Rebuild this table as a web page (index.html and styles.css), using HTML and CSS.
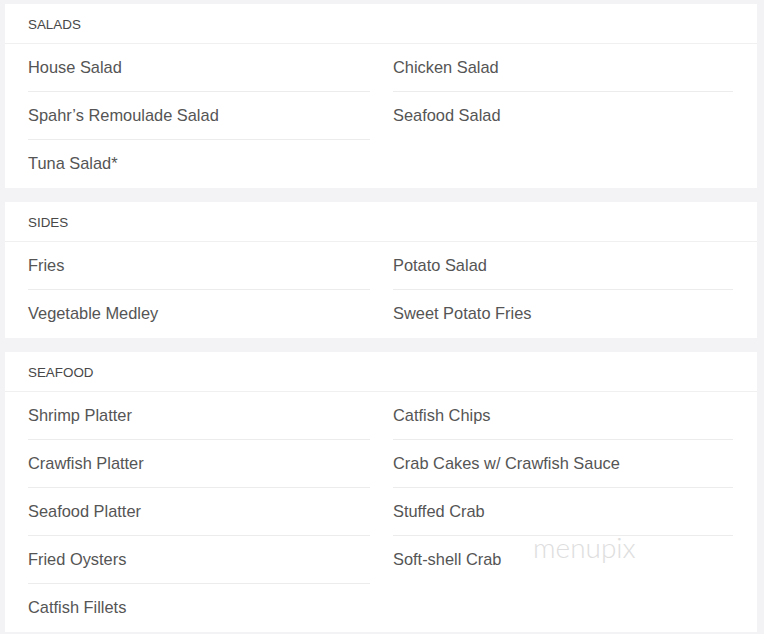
FILE: index.html
```html
<!DOCTYPE html>
<html>
<head>
<meta charset="utf-8">
<link rel="stylesheet" href="styles.css">
</head>
<body>
<div class="page">
  <section class="card">
    <h2 class="card-title">SALADS</h2>
    <div class="cols">
      <ul class="col">
        <li>House Salad</li>
        <li>Spahr’s Remoulade Salad</li>
        <li>Tuna Salad*</li>
      </ul>
      <ul class="col">
        <li>Chicken Salad</li>
        <li>Seafood Salad</li>
      </ul>
    </div>
  </section>
  <section class="card">
    <h2 class="card-title">SIDES</h2>
    <div class="cols">
      <ul class="col">
        <li>Fries</li>
        <li>Vegetable Medley</li>
      </ul>
      <ul class="col">
        <li>Potato Salad</li>
        <li>Sweet Potato Fries</li>
      </ul>
    </div>
  </section>
  <section class="card seafood">
    <h2 class="card-title">SEAFOOD</h2>
    <div class="cols">
      <ul class="col">
        <li>Shrimp Platter</li>
        <li>Crawfish Platter</li>
        <li>Seafood Platter</li>
        <li>Fried Oysters</li>
        <li>Catfish Fillets</li>
      </ul>
      <ul class="col">
        <li>Catfish Chips</li>
        <li>Crab Cakes w/ Crawfish Sauce</li>
        <li>Stuffed Crab</li>
        <li>Soft-shell Crab</li>
      </ul>
    </div>
    <div class="watermark">menupix</div>
  </section>
</div>
</body>
</html>
```

FILE: styles.css
```css
html, body {
  margin: 0;
  padding: 0;
  background: #f3f3f5;
}
body {
  font-family: "Liberation Sans", Arial, sans-serif;
  color: #555;
}
.page {
  width: 752px;
  padding: 4px 0 0 5px;
  display: flex;
  flex-direction: column;
  gap: 14px;
}
.card {
  background: #fff;
  position: relative;
}
.card-title {
  margin: 0;
  height: 38px;
  padding: 1px 23px 0;
  line-height: 39px;
  font-size: 13.4px;
  font-weight: normal;
  color: #484848;
  border-bottom: 1px solid #f0f0f0;
}
.cols {
  display: grid;
  grid-template-columns: 342px 340px;
  column-gap: 23px;
  padding: 0 24px 0 23px;
}
.col {
  list-style: none;
  margin: 0;
  padding: 0;
}
.col li {
  height: 47px;
  line-height: 46px;
  font-size: 16.4px;
  color: #555;
  border-bottom: 1px solid #ececec;
}
.col li:last-child {
  border-bottom: 1px solid transparent;
}
.watermark {
  position: absolute;
  left: 528px;
  top: 178px;
  font-family: Lato, "DejaVu Sans", sans-serif;
  font-weight: 300;
  font-size: 28px;
  color: #dedede;
}
```
